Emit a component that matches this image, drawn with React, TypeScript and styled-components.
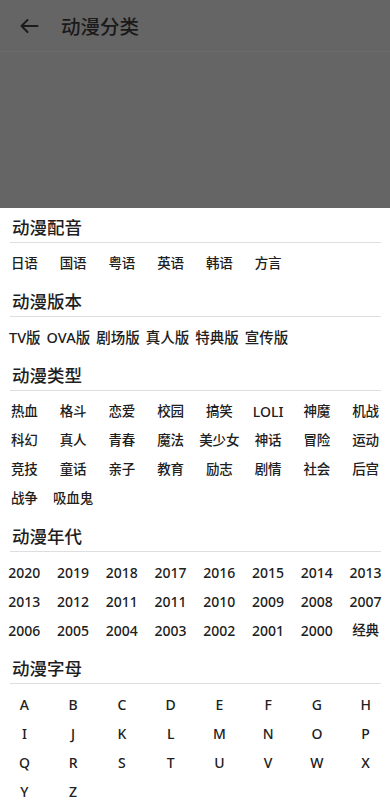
import styled, { createGlobalStyle } from 'styled-components';

const GlobalStyle = createGlobalStyle`
  html, body {
    margin: 0;
    padding: 0;
    background: #ffffff;
    font-family: "Noto Sans", "Noto Sans CJK SC", sans-serif;
  }
`;

const Page = styled.div`
  width: 390px;
  min-height: 804px;
  background: #ffffff;
`;

const Backdrop = styled.div`
  height: 208px;
  background: #656565;
`;

const Toolbar = styled.div`
  height: 52px;
  display: flex;
  align-items: center;
  border-bottom: 1px solid #6c6c6c;
  box-sizing: border-box;
`;

const BackButton = styled.button`
  width: 58px;
  height: 52px;
  padding: 0 0 0 19px;
  margin: 0;
  border: none;
  background: none;
  display: flex;
  align-items: center;
  color: #1b1b1b;
`;

const ToolbarTitle = styled.h1`
  margin: 0 0 0 3px;
  font-family: "Noto Sans CJK SC", sans-serif;
  font-size: 19.5px;
  font-weight: 500;
  color: #1a1a1a;
`;

const Sheet = styled.div`
  background: #ffffff;
`;

const SectionTitle = styled.h2`
  margin: 7px 0 0;
  padding-left: 12px;
  height: 24px;
  line-height: 24px;
  font-family: "Noto Sans CJK SC", sans-serif;
  font-size: 17.5px;
  font-weight: 500;
  color: #1e1e1e;
`;

const Divider = styled.div`
  margin: 3px 9px 0 10px;
  height: 1px;
  background: #dedede;
`;

const Grid = styled.div`
  display: grid;
  grid-template-columns: repeat(8, 1fr);
  padding: 6px 0 4px;
`;

const Wrap = styled.div`
  display: flex;
  flex-wrap: wrap;
  gap: 0 6px;
  padding: 6px 9px 4px;
`;

const Item = styled.span<{ $latin?: boolean; $large?: boolean }>`
  height: 29px;
  line-height: 29px;
  text-align: center;
  white-space: nowrap;
  font-family: "Noto Sans", "Noto Sans CJK SC", sans-serif;
  font-size: ${(p) => (p.$large ? '14.5px' : p.$latin ? '14px' : '13.5px')};
  font-weight: 500;
  color: #202020;
`;

const BackIcon = () => (
  <svg width="20" height="16" viewBox="0 0 20 16" fill="none">
    <path
      d="M18.5 8H2.5M8.5 2L2.5 8L8.5 14"
      stroke="currentColor"
      strokeWidth="2"
      strokeLinecap="round"
      strokeLinejoin="round"
    />
  </svg>
);

const dubbing = ['日语', '国语', '粤语', '英语', '韩语', '方言'];
const versions = ['TV版', 'OVA版', '剧场版', '真人版', '特典版', '宣传版'];
const genres = [
  '热血', '格斗', '恋爱', '校园', '搞笑', 'LOLI', '神魔', '机战',
  '科幻', '真人', '青春', '魔法', '美少女', '神话', '冒险', '运动',
  '竞技', '童话', '亲子', '教育', '励志', '剧情', '社会', '后宫',
  '战争', '吸血鬼',
];
const years = [
  '2020', '2019', '2018', '2017', '2016', '2015', '2014', '2013',
  '2013', '2012', '2011', '2011', '2010', '2009', '2008', '2007',
  '2006', '2005', '2004', '2003', '2002', '2001', '2000', '经典',
];
const letters = 'ABCDEFGHIJKLMNOPQRSTUVWXYZ'.split('');

const isLatin = (s: string) => /^[A-Za-z0-9]+$/.test(s);

function Section({ title, items, wrap }: { title: string; items: string[]; wrap?: boolean }) {
  const List = wrap ? Wrap : Grid;
  return (
    <section>
      <SectionTitle>{title}</SectionTitle>
      <Divider />
      <List>
        {items.map((item, i) => (
          <Item key={i} $latin={isLatin(item)} $large={wrap}>{item}</Item>
        ))}
      </List>
    </section>
  );
}

export default function App() {
  return (
    <>
      <GlobalStyle />
      <Page>
        <Backdrop>
          <Toolbar>
            <BackButton aria-label="返回">
              <BackIcon />
            </BackButton>
            <ToolbarTitle>动漫分类</ToolbarTitle>
          </Toolbar>
        </Backdrop>
        <Sheet>
          <Section title="动漫配音" items={dubbing} />
          <Section title="动漫版本" items={versions} wrap />
          <Section title="动漫类型" items={genres} />
          <Section title="动漫年代" items={years} />
          <Section title="动漫字母" items={letters} />
        </Sheet>
      </Page>
    </>
  );
}
